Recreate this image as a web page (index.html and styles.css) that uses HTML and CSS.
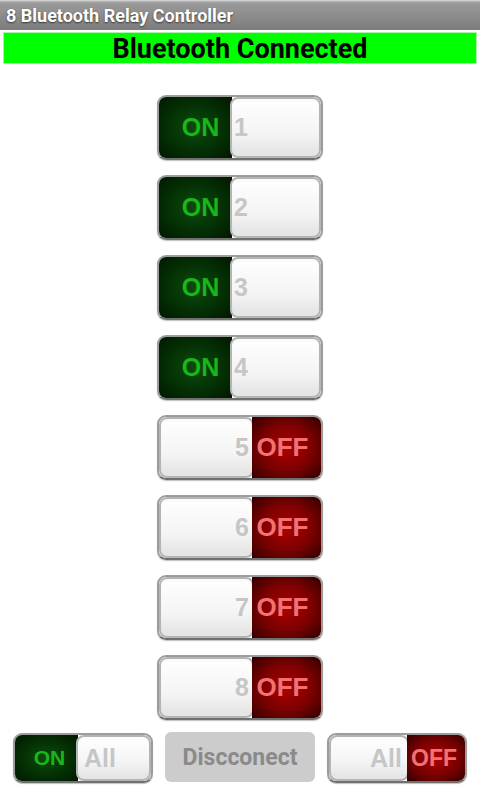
FILE: index.html
```html
<!DOCTYPE html>
<html lang="en">
<head>
  <meta charset="UTF-8">
  <meta name="viewport" content="width=device-width, initial-scale=1.0">
  <title>8 Bluetooth Relay Controller</title>
  <link rel="stylesheet" href="styles.css">
</head>
<body>
  <div class="title-bar">8 Bluetooth Relay Controller</div>
  <div class="status">Bluetooth Connected</div>

  <div class="relays">
    <div class="switch is-on"><div class="side on">ON</div><div class="knob">1</div></div>
    <div class="switch is-on"><div class="side on">ON</div><div class="knob">2</div></div>
    <div class="switch is-on"><div class="side on">ON</div><div class="knob">3</div></div>
    <div class="switch is-on"><div class="side on">ON</div><div class="knob">4</div></div>
    <div class="switch is-off"><div class="knob">5</div><div class="side off">OFF</div></div>
    <div class="switch is-off"><div class="knob">6</div><div class="side off">OFF</div></div>
    <div class="switch is-off"><div class="knob">7</div><div class="side off">OFF</div></div>
    <div class="switch is-off"><div class="knob">8</div><div class="side off">OFF</div></div>
  </div>

  <div class="bottom-row">
    <div class="switch small is-on"><div class="side on">ON</div><div class="knob">All</div></div>
    <button class="disconnect-btn">Discconect</button>
    <div class="switch small is-off"><div class="knob">All</div><div class="side off">OFF</div></div>
  </div>
</body>
</html>
```

FILE: styles.css
```css
body {
  margin: 0;
  padding: 0;
  background-color: #fff;
  font-family: Roboto, "DejaVu Sans", sans-serif;
  width: 480px;
  height: 800px;
  overflow: hidden;
}

.title-bar {
  height: 30px;
  line-height: 30px;
  padding-left: 6px;
  color: #fff;
  font-size: 18px;
  font-weight: bold;
  text-shadow: 0 1px 2px rgba(0, 0, 0, 0.6);
  background: linear-gradient(#b8b8b8 0, #9a9a9a 8%, #7c7c7c 100%);
  border-top: 1px solid #d0d0d0;
  box-sizing: border-box;
}

.status {
  margin: 2px 3px 0 3px;
  height: 32px;
  line-height: 33px;
  background-color: #00ff00;
  border: 1px solid #aef0ae;
  box-sizing: border-box;
  text-align: center;
  font-size: 27px;
  font-weight: bold;
  color: #000;
}

.relays {
  display: flex;
  flex-direction: column;
  align-items: center;
  gap: 15px;
  padding-top: 31px;
}

/* toggle switch */
.switch {
  width: 166px;
  height: 65px;
  display: flex;
  box-sizing: border-box;
  border: 2px solid #9c9c9c;
  border-bottom-color: #707070;
  border-radius: 9px;
  overflow: hidden;
  box-shadow: 0 1px 1px rgba(0, 0, 0, 0.25);
  font-family: "Liberation Sans", Arial, sans-serif;
  font-weight: bold;
}

.side {
  display: flex;
  align-items: center;
  justify-content: center;
  box-sizing: border-box;
  font-size: 25px;
}

.side.on {
  width: 73px;
  color: #1bb51b;
  padding-left: 10px;
  background: radial-gradient(ellipse at center, #0a4d0a 0%, #043004 55%, #011801 100%);
}

.side.off {
  flex: 1;
  color: #f07272;
  font-size: 26px;
  padding-right: 8px;
  background: radial-gradient(ellipse at center, #b00000 0%, #7a0000 55%, #300000 100%);
}

.knob {
  display: flex;
  align-items: center;
  box-sizing: border-box;
  border: 2px solid #b4b4b4;
  border-radius: 8px;
  background: linear-gradient(#ffffff 0%, #f4f4f4 60%, #e2e2e2 100%);
  box-shadow: inset 0 -3px 0 #e6e6e6, inset 0 3px 0 #fafafa;
  color: #c6c6c6;
  font-size: 25px;
}

.is-on .knob {
  flex: 1;
  margin-left: -2px;
  padding-left: 2px;
}

.is-off .knob {
  width: 95px;
  justify-content: flex-end;
  padding-right: 3px;
  margin-right: -2px;
}

.bottom-row {
  display: flex;
  justify-content: space-between;
  align-items: center;
  padding: 0 13px;
  margin-top: 12px;
}

.switch.small {
  width: 140px;
  height: 50px;
}

.switch.small .side {
  font-size: 21px;
}

.switch.small.is-on .side.on {
  width: 63px;
  padding-left: 6px;
}

.switch.small.is-on .knob {
  padding-left: 6px;
}

.switch.small.is-off .knob {
  width: 80px;
  padding-right: 5px;
}

.switch.small .side.off {
  font-size: 23px;
  padding-right: 4px;
}

.switch.small .knob {
  font-size: 25px;
}

.disconnect-btn {
  width: 150px;
  height: 50px;
  border: none;
  border-radius: 6px;
  background-color: #cccccc;
  color: #8a8a8a;
  font-family: Roboto, "DejaVu Sans", sans-serif;
  font-weight: bold;
  font-size: 23px;
  padding: 0;
  margin-bottom: 2px;
}
```
